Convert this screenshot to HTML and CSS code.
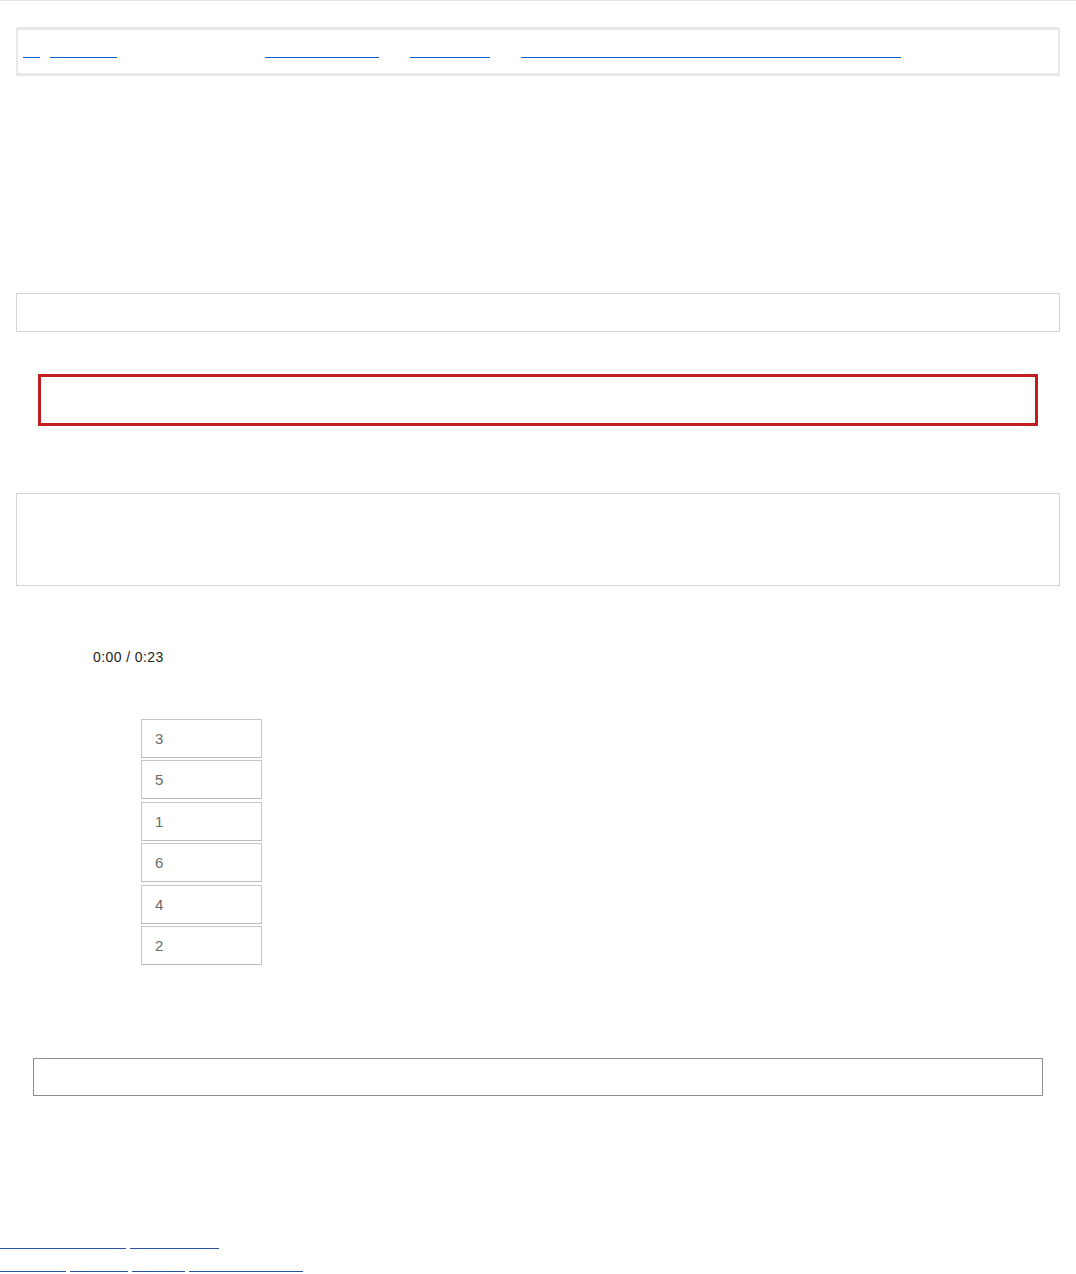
FILE: index.html
```html
<!DOCTYPE html>
<html lang="en">
<head>
<meta charset="utf-8">
<title>Exercise</title>
<link rel="stylesheet" href="styles.css">
</head>
<body>
<div class="topline"></div>
<nav class="crumbs" aria-label="breadcrumb">
  <a href="#" class="crumb c1" aria-label="home">&nbsp;</a>
  <a href="#" class="crumb c2" aria-label="course">&nbsp;</a>
  <a href="#" class="crumb c3" aria-label="section">&nbsp;</a>
  <a href="#" class="crumb c4" aria-label="unit">&nbsp;</a>
  <a href="#" class="crumb c5" aria-label="activity">&nbsp;</a>
</nav>
<div class="box box-a"></div>
<div class="alert"></div>
<div class="box box-b"></div>
<div class="player"><span class="time">0:00 / 0:23</span></div>
<ol class="order">
  <li class="order-item">3</li>
  <li class="order-item">5</li>
  <li class="order-item">1</li>
  <li class="order-item">6</li>
  <li class="order-item">4</li>
  <li class="order-item">2</li>
</ol>
<div class="answer"></div>
<footer class="foot">
  <div class="foot-row">
    <a href="#" class="flink f1" aria-label="link">&nbsp;</a>
    <a href="#" class="flink f2" aria-label="link">&nbsp;</a>
  </div>
  <div class="foot-row">
    <a href="#" class="flink f3" aria-label="link">&nbsp;</a>
    <a href="#" class="flink f4" aria-label="link">&nbsp;</a>
    <a href="#" class="flink f5" aria-label="link">&nbsp;</a>
    <a href="#" class="flink f6" aria-label="link">&nbsp;</a>
  </div>
</footer>
</body>
</html>
```

FILE: styles.css
```css
html, body {
  margin: 0;
  padding: 0;
  background: #ffffff;
  font-family: "Liberation Sans", Arial, sans-serif;
}

.topline {
  height: 1px;
  background: #e2e1e4;
}

.crumbs {
  margin: 26px 16px 0;
  height: 49px;
  box-sizing: border-box;
  border-style: solid;
  border-color: #e6e8eb;
  border-width: 3px 2px;
  display: flex;
  align-items: flex-start;
}

.crumb {
  display: block;
  height: 27px;
  border-bottom: 1px solid #0f5bd0;
  text-decoration: none;
  font-size: 14px;
  line-height: 27px;
}

.c1 { width: 17px; margin-left: 5px; }
.c2 { width: 67px; margin-left: 10px; }
.c3 { width: 114px; margin-left: 148px; }
.c4 { width: 80px; margin-left: 31px; }
.c5 { width: 380px; margin-left: 31px; }

.box {
  margin: 0 16px;
  box-sizing: border-box;
  border: 1px solid #d2d4da;
}

.box-a {
  margin-top: 217px;
  height: 39px;
}

.alert {
  margin: 42px 38px 0;
  width: 1000px;
  height: 52px;
  box-sizing: border-box;
  border: 3px solid #c21e20;
}

.box-b {
  margin-top: 67px;
  height: 93px;
}

.player {
  margin-top: 63px;
  padding-left: 93px;
  height: 16px;
  line-height: 16px;
}

.time {
  font-size: 14px;
  letter-spacing: 0.4px;
  color: #222222;
}

.order {
  list-style: none;
  margin: 54px 0 0 141px;
  padding: 0;
  width: 121px;
  display: flex;
  flex-direction: column;
  gap: 2.4px;
}

.order-item {
  height: 39px;
  box-sizing: border-box;
  border: 1px solid #c6c6cb;
  border-bottom-color: #b9b9be;
  padding-left: 13px;
  font-size: 15px;
  line-height: 37px;
  color: #6a6a6a;
}

.answer {
  margin: 93px 33px 0;
  height: 38px;
  box-sizing: border-box;
  border: 1px solid #8b8e9a;
}

.foot {
  margin-top: 130px;
}

.foot-row {
  display: flex;
  gap: 4px;
  height: 23px;
}

.flink {
  display: block;
  height: 22px;
  border-bottom: 1px solid #2c52a0;
  text-decoration: none;
}

.f1 { width: 126px; }
.f2 { width: 89px; }
.f3 { width: 66px; }
.f4 { width: 58px; }
.f5 { width: 53px; }
.f6 { width: 114px; }
```
